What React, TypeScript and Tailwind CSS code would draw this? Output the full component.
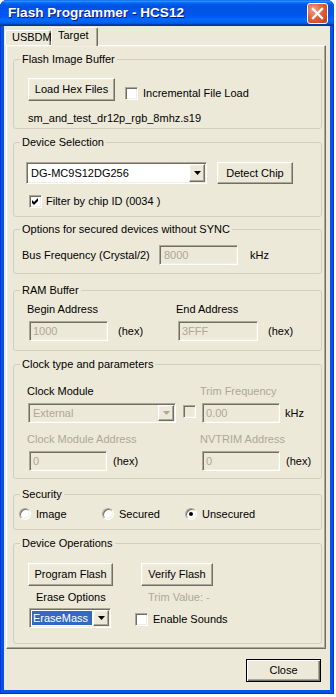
import React from "react";

const sunken =
  "border border-t-[#ACA899] border-l-[#ACA899] border-r-white border-b-white shadow-[inset_1px_1px_0_#716F64,inset_-1px_-1px_0_#F1EFE2]";
const raised =
  "border border-t-white border-l-white border-r-[#716F64] border-b-[#716F64] shadow-[inset_-1px_-1px_0_#ACA899,inset_1px_1px_0_#F1EFE2]";

function Button({ label, className }: { label: string; className: string }) {
  return (
    <div className={`flex items-center justify-center bg-[#ECE9D8] ${raised} ${className}`}>
      {label}
    </div>
  );
}

function Field({ value, className, disabled }: { value: string; className: string; disabled?: boolean }) {
  return (
    <div
      className={`flex items-center pl-[3px] ${sunken} ${
        disabled ? "bg-[#ECE9D8] text-[#ACA899]" : "bg-white"
      } ${className}`}
    >
      {value}
    </div>
  );
}

function DropBtn({ disabled }: { disabled?: boolean }) {
  return (
    <div className={`ml-auto flex items-center justify-center w-[16px] self-stretch my-[1px] mr-[1px] bg-[#ECE9D8] ${raised}`}>
      <svg width="7" height="4" viewBox="0 0 7 4">
        <path d="M0 0h7L3.5 4z" fill={disabled ? "#ACA899" : "#000"} />
      </svg>
    </div>
  );
}

function Combo({ value, className, disabled }: { value: string; className: string; disabled?: boolean }) {
  return (
    <div
      className={`flex items-stretch ${sunken} ${disabled ? "bg-[#ECE9D8] text-[#ACA899]" : "bg-white"} ${className}`}
    >
      <span className="self-center pl-[4px]">{value}</span>
      <DropBtn disabled={disabled} />
    </div>
  );
}

function Check({ checked, disabled }: { checked?: boolean; disabled?: boolean }) {
  return (
    <div
      className={`shrink-0 w-[13px] h-[13px] flex items-center justify-center ${sunken} ${
        disabled ? "bg-[#ECE9D8]" : "bg-white"
      }`}
    >
      {checked && (
        <svg width="7" height="7" viewBox="0 0 7 7">
          <path d="M0 2 L2 4 L6 0 V3 L2 7 L0 5 Z" fill="#000" />
        </svg>
      )}
    </div>
  );
}

function Radio({ checked, label }: { checked?: boolean; label: string }) {
  return (
    <div className="w-[83px] flex items-center gap-[5px]">
      <div className="shrink-0 w-[12px] h-[12px] rounded-full bg-white border border-t-[#ACA899] border-l-[#ACA899] border-r-white border-b-white shadow-[inset_1px_1px_0_#716F64,inset_-1px_-1px_0_#F1EFE2] flex items-center justify-center">
        {checked && <div className="w-[4px] h-[4px] rounded-full bg-black" />}
      </div>
      <span>{label}</span>
    </div>
  );
}

function Group({
  title,
  className,
  children,
}: {
  title: string;
  className: string;
  children?: React.ReactNode;
}) {
  return (
    <div className={`shrink-0 flex flex-col ml-[6px] w-[309px] border border-[#D0D0BF] rounded-[3px] ${className}`}>
      <span className="-mt-[7px] ml-[6px] self-start px-[2px] h-[13px] bg-[#ECE9D8] leading-[13px]">{title}</span>
      {children}
    </div>
  );
}

export default function App() {
  return (
    <div className="w-[336px] h-[697px] bg-white font-['Liberation_Sans',Arial,sans-serif] text-[11px] leading-[13px] text-black">
      <div className="w-[334px] h-[694px] flex flex-col rounded-t-[7px] overflow-hidden bg-[#0055E5] shadow-[inset_1px_0_0_#0831D9,inset_-1px_0_0_#0831D9,inset_0_-1px_0_#0831D9]">
        {/* Title bar */}
        <div className="h-[26px] shrink-0 flex items-center pl-[8px] pr-[6px] bg-[linear-gradient(to_bottom,#0058EE_0%,#3593FF_4%,#288EFF_6%,#127DFF_8%,#036FFC_10%,#0262EE_14%,#0057E5_20%,#0054E3_24%,#0055EB_56%,#005BF5_66%,#026AFE_76%,#0062EF_86%,#0052D6_92%,#0040AB_94%,#003092_100%)]">
          <span className="text-white font-bold text-[13.6px] leading-[16px] [text-shadow:1px_1px_#0F1089]">
            Flash Programmer - HCS12
          </span>
          <div className="ml-auto w-[21px] h-[21px] rounded-[3px] border border-white bg-[radial-gradient(circle_at_30%_30%,#F2A088_0%,#E2613E_45%,#C33E1C_100%)] flex items-center justify-center">
            <svg width="19" height="19" viewBox="0 0 19 19">
              <path d="M5 5 L14 14 M14 5 L5 14" stroke="#fff" strokeWidth="2.3" strokeLinecap="square" />
            </svg>
          </div>
        </div>

        {/* Body */}
        <div className="flex-1 mx-[4px] mb-[4px] bg-[#ECE9D8] flex flex-col pt-[1px]">
          {/* Tabs */}
          <div className="h-[18px] shrink-0 flex items-end pl-[1px]">
            <div className="w-[46px] h-[15px] rounded-t-[2px] border-t border-l border-t-white border-l-white border-r border-r-[#716F64] shadow-[inset_-1px_0_0_#ACA899] pl-[6px] leading-[13px]">
              USBDM
            </div>
            <div className="relative z-10 w-[47px] h-[19px] -mb-[1px] rounded-t-[2px] bg-[#ECE9D8] border-t border-l border-t-white border-l-white border-r border-r-[#716F64] shadow-[inset_-1px_0_0_#ACA899] pl-[6px] pt-[1px] leading-[13px]">
              Target
            </div>
          </div>

          {/* Tab panel */}
          <div className={`ml-[2px] w-[320px] h-[604px] shrink-0 flex flex-col bg-[#ECE9D8] ${raised}`}>
            <Group title="Flash Image Buffer" className="mt-[13px] h-[70px]">
              <div className="mt-[12px] ml-[14px] flex items-start">
                <Button label="Load Hex Files" className="w-[87px] h-[23px]" />
                <div className="mt-[9px] ml-[10px] h-[13px] flex items-center gap-[5px]">
                  <Check />
                  <span>Incremental File Load</span>
                </div>
              </div>
              <div className="mt-[11px] ml-[14px]">sm_and_test_dr12p_rgb_8mhz.s19</div>
            </Group>

            <Group title="Device Selection" className="mt-[13px] h-[75px]">
              <div className="mt-[13px] ml-[12px] flex items-start">
                <Combo value="DG-MC9S12DG256" className="w-[181px] h-[22px]" />
                <Button label="Detect Chip" className="ml-[10px] w-[76px] h-[22px]" />
              </div>
              <div className="mt-[11px] ml-[15px] h-[13px] flex items-center gap-[4px]">
                <Check checked />
                <span>Filter by chip ID (0034 )</span>
              </div>
            </Group>

            <Group title="Options for secured devices without SYNC" className="mt-[12px] h-[45px]">
              <div className="mt-[9px] h-[20px] flex items-center">
                <span className="ml-[8px] w-[137px]">Bus Frequency (Crystal/2)</span>
                <Field value="8000" disabled className="w-[79px] h-[20px] pl-[4px]" />
                <span className="ml-[12px]">kHz</span>
              </div>
            </Group>

            <Group title="RAM Buffer" className="mt-[16px] h-[61px]">
              <div className="mt-[6px] flex">
                <span className="ml-[13px] w-[149px]">Begin Address</span>
                <span>End Address</span>
              </div>
              <div className="mt-[5px] flex items-center ml-[15px]">
                <div className="w-[149px] flex items-center">
                  <Field value="1000" disabled className="w-[79px] h-[20px]" />
                  <span className="ml-[10px]">(hex)</span>
                </div>
                <div className="flex items-center">
                  <Field value="3FFF" disabled className="w-[80px] h-[20px]" />
                  <span className="ml-[10px]">(hex)</span>
                </div>
              </div>
            </Group>

            <Group title="Clock type and parameters" className="mt-[13px] h-[115px]">
              <div className="mt-[14px] flex">
                <span className="ml-[13px] w-[173px]">Clock Module</span>
                <span className="text-[#ACA899]">Trim Frequency</span>
              </div>
              <div className="mt-[5px] ml-[14px] flex items-start">
                <Combo value="External" disabled className="w-[148px] h-[20px]" />
                <div className="ml-[7px] mt-[2px]">
                  <Check disabled />
                </div>
                <Field value="0.00" disabled className="ml-[6px] w-[78px] h-[20px]" />
                <span className="ml-[5px] self-center">kHz</span>
              </div>
              <div className="mt-[10px] flex text-[#ACA899]">
                <span className="ml-[13px] w-[173px]">Clock Module Address</span>
                <span>NVTRIM Address</span>
              </div>
              <div className="mt-[5px] ml-[15px] flex items-center">
                <div className="w-[173px] flex items-center">
                  <Field value="0" disabled className="w-[78px] h-[20px]" />
                  <span className="ml-[6px]">(hex)</span>
                </div>
                <div className="flex items-center">
                  <Field value="0" disabled className="w-[78px] h-[20px]" />
                  <span className="ml-[6px]">(hex)</span>
                </div>
              </div>
            </Group>

            <Group title="Security" className="mt-[15px] h-[36px]">
              <div className="mt-[7px] ml-[5px] h-[12px] flex items-center">
                <Radio label="Image" />
                <Radio label="Secured" />
                <Radio label="Unsecured" checked />
              </div>
            </Group>

            <Group title="Device Operations" className="mt-[13px] h-[101px]">
              <div className="mt-[13px] ml-[14px] flex">
                <Button label="Program Flash" className="w-[85px] h-[23px]" />
                <Button label="Verify Flash" className="ml-[28px] w-[72px] h-[23px]" />
              </div>
              <div className="mt-[5px] flex">
                <span className="ml-[22px] w-[112px]">Erase Options</span>
                <span className="text-[#ACA899]">Trim Value: -</span>
              </div>
              <div className="mt-[4px] ml-[15px] flex items-start">
                <div className={`w-[82px] h-[20px] flex items-stretch bg-white ${sunken}`}>
                  <span className="self-center ml-[2px] h-[14px] leading-[14px] w-[60px] pl-[1px] bg-[#316AC5] text-white">
                    EraseMass
                  </span>
                  <DropBtn />
                </div>
                <div className="ml-[24px] mt-[5px] h-[13px] flex items-center gap-[5px]">
                  <Check />
                  <span>Enable Sounds</span>
                </div>
              </div>
            </Group>
          </div>

          {/* Close */}
          <div className="mt-[10px] self-end mr-[9px] w-[75px] h-[23px] flex items-center justify-center border border-black bg-[#ECE9D8] shadow-[inset_1px_1px_0_#fff,inset_-1px_-1px_0_#716F64,inset_-2px_-2px_0_#ACA899]">
            Close
          </div>
        </div>
      </div>
    </div>
  );
}
